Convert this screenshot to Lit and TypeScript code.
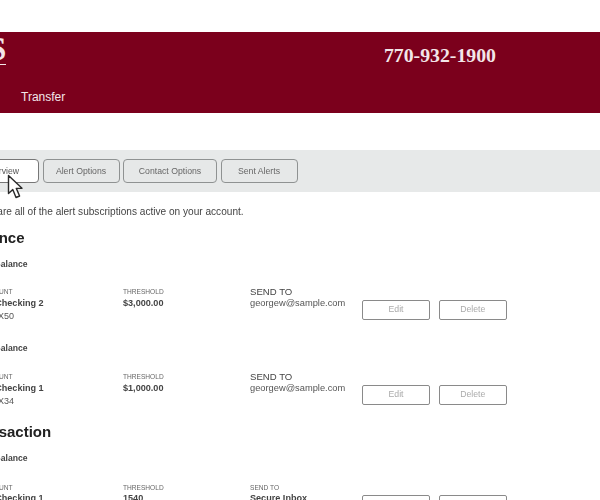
import { LitElement, html, css } from "lit";
import { customElement } from "lit/decorators.js";

type Row = {
  sub: string; name: string; mask?: string; threshold: string; sendTo: string; dest: string; strongDest?: boolean;
};
const groups: { title: string; rows: Row[] }[] = [
  { title: "Balance", rows: [
    { sub: "Low Balance", name: "My Checking 2", mask: "XXXX50", threshold: "$3,000.00", sendTo: "SEND TO", dest: "georgew@sample.com" },
    { sub: "Low Balance", name: "My Checking 1", mask: "XXXX34", threshold: "$1,000.00", sendTo: "SEND TO", dest: "georgew@sample.com" },
  ]},
  { title: "Transaction", rows: [
    { sub: "Low Balance", name: "My Checking 1", threshold: "1540", sendTo: "SEND TO", dest: "Secure Inbox", strongDest: true },
  ]},
];

@customElement("app-root")
export class AppRoot extends LitElement {
  static styles = css`
    :host { display: block; width: 600px; height: 500px; overflow: hidden; position: relative; background: #fff; font-family: "Liberation Sans", Arial, sans-serif; color: #333; }
    .blur { filter: blur(0.45px); height: 500px; padding-top: 32px; box-sizing: border-box; overflow: hidden; }
    .banner { height: 81px; background: #7b001c; color: #f3e6e8; display: flex; flex-direction: column; overflow: hidden; }
    .banner-top { display: flex; justify-content: space-between; align-items: flex-start; height: 57px; padding-right: 104px; }
    .logo { margin-left: -12px; margin-top: 4px; font: bold 33px/27px "Liberation Serif", serif; border-bottom: 1px solid #f3e6e8; height: 28px; }
    .phone { margin-top: 12px; font: bold 19.8px/23px "Liberation Serif", serif; }
    .nav { padding-left: 21px; font-size: 12px; line-height: 16px; }
    .tabbar { margin-top: 37px; height: 42px; background: #e7e9e9; padding: 9px 0 0 0; box-sizing: border-box; }
    .tabs { margin-left: -37px; display: grid; grid-template-columns: 76px 77px 94px 77px; gap: 3.5px; }
    .tab { height: 24px; box-sizing: border-box; border: 1px solid #8f9292; border-radius: 4px; background: #e6e8e8; color: #666; font-size: 8.7px; line-height: 22px; text-align: center; }
    .tab.on { background: #fff; border-color: #777; color: #555; }
    .content { margin-left: -33px; }
    .desc { margin: 13px 0 0 0; font-size: 10.1px; line-height: 14px; color: #444; white-space: nowrap; }
    h2 { margin: 10px 0 0; font-size: 15px; line-height: 18px; font-weight: bold; color: #222; }
    .group + .group h2 { margin-top: 15px; }
    .sub { margin: 11px 0 0 8px; font-size: 8.6px; line-height: 12px; font-weight: bold; color: #444; }
    .entry + .entry .sub { margin-top: 19px; }
    .row { margin: 16px 0 0 13px; display: grid; grid-template-columns: 143px 127px 112px 68px 68px; }
    .entry + .entry .row { margin-top: 17px; }
    .row.tight { margin-top: 18px; }
    .label { font-size: 6.6px; line-height: 10px; padding-top: 1px; color: #666; white-space: nowrap; }
    .tight .label { line-height: 9px; }
    .send { font-size: 9.6px; line-height: 11px; color: #444; }
    .val { font-size: 9.1px; line-height: 12px; font-weight: bold; color: #444; white-space: nowrap; }
    .mask { font-size: 9px; line-height: 14px; color: #555; }
    .email { font-size: 9.3px; line-height: 12px; color: #555; white-space: nowrap; }
    .btn { width: 68px; height: 19.5px; margin-top: 14px; box-sizing: border-box; border: 1px solid #8a8a8a; border-radius: 2px; font-size: 8.7px; line-height: 17px; text-align: center; color: #aaa; background: #fff; }
    .btn.del { margin-left: 9px; width: 67.5px; }
    .tight .btn { margin-top: 13px; }
    .cursor { position: absolute; left: 7px; top: 174px; width: 17px; height: 26px; }
  `;

  render() {
    return html`
      <div class="blur">
        <div class="banner">
          <div class="banner-top"><div class="logo">S</div><div class="phone">770-932-1900</div></div>
          <div class="nav">Transfer</div>
        </div>
        <div class="tabbar">
          <div class="tabs">
            <div class="tab on">Overview</div>
            <div class="tab">Alert Options</div>
            <div class="tab">Contact Options</div>
            <div class="tab">Sent Alerts</div>
          </div>
        </div>
        <div class="content">
          <p class="desc">Below are all of the alert subscriptions active on your account.</p>
          ${groups.map(g => html`
            <div class="group">
              <h2>${g.title}</h2>
              ${g.rows.map(r => html`
                <div class="entry">
                  <div class="sub">${r.sub}</div>
                  <div class="row ${r.strongDest ? "tight" : ""}">
                    <div>
                      <div class="label">ACCOUNT</div>
                      <div class="val">${r.name}</div>
                      ${r.mask ? html`<div class="mask">${r.mask}</div>` : ""}
                    </div>
                    <div>
                      <div class="label">THRESHOLD</div>
                      <div class="val">${r.threshold}</div>
                    </div>
                    <div>
                      ${r.strongDest ? html`<div class="label">${r.sendTo}</div><div class="val">${r.dest}</div>`
                        : html`<div class="send">${r.sendTo}</div><div class="email">${r.dest}</div>`}
                    </div>
                    <div class="btn">Edit</div>
                    <div class="btn del">Delete</div>
                  </div>
                </div>`)}
            </div>`)}
        </div>
      </div>
      <svg class="cursor" viewBox="0 0 17 26">
        <path d="M1.5 1.5 L1.5 19.5 L5.8 15.6 L9 23.5 L12.6 22 L9.3 14.4 L15 14.2 Z" fill="#fff" stroke="#2a2a2a" stroke-width="1.4" stroke-linejoin="round"/>
      </svg>
    `;
  }
}
